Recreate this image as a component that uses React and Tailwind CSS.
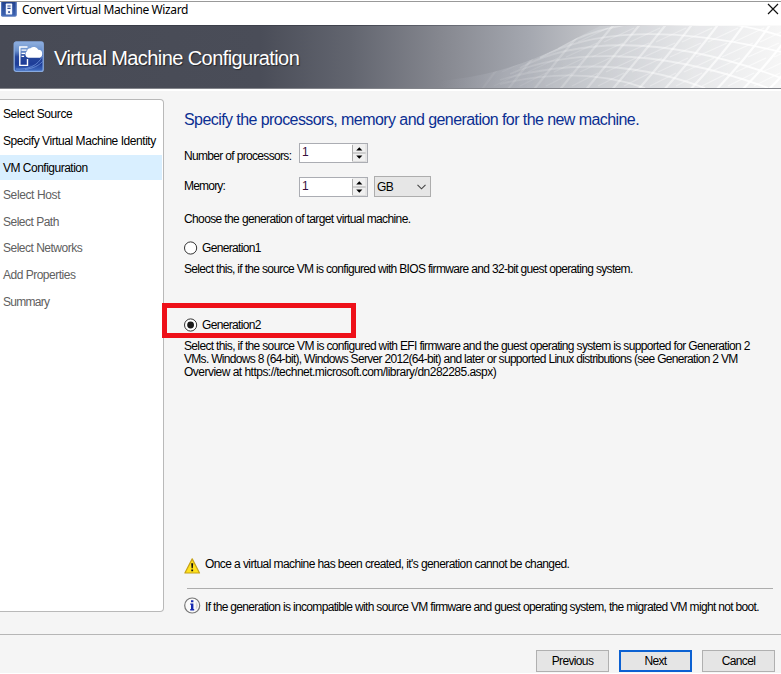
import React from "react";

const steps = [
  { label: "Select Source", cls: "text-black tracking-[-0.42px]" },
  { label: "Specify Virtual Machine Identity", cls: "text-black tracking-[-0.45px]" },
  { label: "VM Configuration", cls: "text-black bg-[#d9efff] tracking-[-0.5px]" },
  { label: "Select Host", cls: "text-[#606060] tracking-[-0.38px]" },
  { label: "Select Path", cls: "text-[#606060] tracking-[-0.5px]" },
  { label: "Select Networks", cls: "text-[#606060] tracking-[-0.5px]" },
  { label: "Add Properties", cls: "text-[#606060] tracking-[-0.5px]" },
  { label: "Summary", cls: "text-[#606060] tracking-[-0.72px]" },
];

function TitleIcon() {
  return (
    <svg width="17" height="16" viewBox="0 0 17 16" className="block shrink-0">
      <defs>
        <linearGradient id="ti" x1="0" y1="0" x2="0" y2="1">
          <stop offset="0" stopColor="#1e3c88" />
          <stop offset="1" stopColor="#3f66b4" />
        </linearGradient>
      </defs>
      <rect x="1" y="-2" width="15.6" height="16.6" rx="1.5" fill="url(#ti)" />
      <rect x="1.6" y="-2" width="14.4" height="16" rx="1" fill="none" stroke="#5f7fc2" strokeWidth="0.9" />
      <rect x="5.8" y="1.6" width="6.4" height="11" rx="0.6" fill="#f4f7ff" />
      <path d="M7.4 4h3.2M7.4 6.4h3.2" stroke="#27468f" strokeWidth="1.1" />
      <rect x="8.2" y="9.2" width="1.7" height="1.7" fill="#27468f" />
    </svg>
  );
}

function HeaderIcon() {
  return (
    <svg width="32" height="32" viewBox="0 0 32 32" className="block shrink-0">
      <defs>
        <linearGradient id="hi" x1="0" y1="0" x2="0" y2="1">
          <stop offset="0" stopColor="#8fb0de" />
          <stop offset="0.3" stopColor="#6a90cc" />
          <stop offset="0.5" stopColor="#27479c" />
          <stop offset="0.75" stopColor="#1d3c98" />
          <stop offset="1" stopColor="#4270c4" />
        </linearGradient>
      </defs>
      <rect x="1.2" y="1" width="29" height="29.4" rx="2" fill="url(#hi)" stroke="#88aadf" strokeWidth="1.3" />
      <path d="M3 28C14 29 25 25 29.5 15M12 28.5c8-1 14-4 17.5-8" stroke="#7ea3e6" strokeWidth="0.9" fill="none" opacity="0.7" />
      <path d="M14.5 6H6.8v18.4h7.7V18" fill="none" stroke="#fff" strokeWidth="1.4" />
      <path d="M8.5 9.2h5M8.5 12.3h3.6M8.5 15.3h2.6" stroke="#fff" strokeWidth="1.2" />
      <path d="M15 16.8a3.8 3.8 0 0 1-.9-6.8 3.2 3.2 0 0 1 3.4-2.8 5 5 0 0 1 7.8 1.6 4 4 0 0 1-.2 8z" fill="#fff" />
    </svg>
  );
}

const HILL = "M0 55C50 50 85 38 118 22Q142 9 160 0H341V62H0z";

function BannerMesh() {
  const v = [0, 1, 2, 3, 4, 5, 6, 7, 8, 9, 10, 11];
  return (
    <svg width="341" height="62" viewBox="0 0 341 62" className="block shrink-0">
      <defs>
        <linearGradient id="mesh" gradientUnits="userSpaceOnUse" x1="0" y1="0" x2="341" y2="20">
          <stop offset="0" stopColor="#9a9da7" stopOpacity="0" />
          <stop offset="0.2" stopColor="#b0b3bb" stopOpacity="0.6" />
          <stop offset="0.4" stopColor="#c3c6cb" />
          <stop offset="0.55" stopColor="#d3d5d9" />
          <stop offset="0.75" stopColor="#e7e8ea" />
          <stop offset="1" stopColor="#f6f6f6" />
        </linearGradient>
        <linearGradient id="lines" gradientUnits="userSpaceOnUse" x1="0" y1="0" x2="341" y2="1">
          <stop offset="0.05" stopColor="#fff" stopOpacity="0" />
          <stop offset="0.4" stopColor="#fff" stopOpacity="0.22" />
          <stop offset="0.7" stopColor="#fff" stopOpacity="0.5" />
          <stop offset="1" stopColor="#fff" stopOpacity="1" />
        </linearGradient>
        <clipPath id="hill">
          <path d={HILL} />
        </clipPath>
      </defs>
      <path d={HILL} fill="url(#mesh)" />
      <g clipPath="url(#hill)" fill="none" stroke="url(#lines)">
        <g strokeWidth="1.8">
          <path d="M118 22C170 -8 260 -16 341 10" />
          <path d="M100 32C150 4 230 -1 341 26" />
          <path d="M80 42C130 14 220 6 341 52" />
          <path d="M70 48C120 26 210 18 328 62" />
          <path d="M60 54C120 36 190 34 265 62" />
          <path d="M60 58C110 46 160 46 205 62" />
        </g>
        <g strokeWidth="2.2">
          {v.map((i) => (
            <path key={i} d={`M${40 + i * 26} 66Q${66 + i * 27} 30 ${98 + i * 26} -4`} />
          ))}
        </g>
        <g strokeWidth="1.1" opacity="0.65">
          {v.map((i) => (
            <path key={i} d={`M${54 + i * 26} 60L${80 + i * 26} 47M${62 + i * 26} 46L${92 + i * 26} 32M${74 + i * 26} 31L${105 + i * 26} 17M${86 + i * 26} 16L${116 + i * 26} 2`} />
          ))}
        </g>
      </g>
    </svg>
  );
}

function Spinner({ value }) {
  return (
    <div className="flex h-5 w-[69px] border border-[#abadb3] bg-white">
      <span className="flex-1 pl-[2px] text-[12px] leading-[17px] text-[#38103c]">{value}</span>
      <svg width="15" height="18" viewBox="0 0 15 18" className="block shrink-0">
        <rect width="15" height="18" fill="#f0f0f0" />
        <path d="M0.5 1V17M0 9H14" stroke="#acacac" />
        <path d="M14 0V18M0 17.5H14" stroke="#dcdcdc" />
        <path d="M4.2 6.5L7.3 3.3L10.4 6.5zM4.2 11.5L7.3 14.7L10.4 11.5z" fill="#000" />
      </svg>
    </div>
  );
}

function Radio({ checked }) {
  return (
    <svg width="14" height="14" viewBox="0 0 14 14" className="block shrink-0">
      <circle cx="6.6" cy="7" r="6.1" fill="#fff" stroke="#333" strokeWidth="1" />
      {checked && <circle cx="6.6" cy="7" r="3.4" fill="#1a1a1a" />}
    </svg>
  );
}

function WarningIcon() {
  return (
    <svg width="17" height="16" viewBox="0 0 17 16" className="block shrink-0">
      <path d="M8.2 0.9L15.5 15H0.9z" fill="#ffe11c" stroke="#c6a217" strokeWidth="1.2" strokeLinejoin="round" />
      <path d="M7.2 5.2h2l-.4 5h-1.2zM7.3 11.5h1.8v1.8H7.3z" fill="#111" />
    </svg>
  );
}

function InfoIcon() {
  return (
    <svg width="17" height="17" viewBox="0 0 17 17" className="block shrink-0">
      <circle cx="8.2" cy="8.5" r="7.5" fill="#fafafa" stroke="#777" strokeWidth="1.2" />
      <path d="M11.8 4.5a5 5 0 0 1 0 8z" fill="#d9d9d9" />
      <path d="M7 3.2h2.4v2.1H7zM6.2 6.6h3.2v5.5h.8v1.3H6.2v-1.3H7V7.8h-.8z" fill="#1429b0" />
    </svg>
  );
}

export default function App() {
  return (
    <div className="flex h-[674px] w-[781px] flex-col overflow-hidden border-b border-white bg-[#f5f5f5] font-['Liberation_Sans',Arial,sans-serif] text-[12px] whitespace-nowrap text-black">
      <div className="h-px shrink-0 bg-white" />
      <header className="flex h-6 shrink-0 items-start border-t border-[#999] bg-white">
        <TitleIcon />
        <h1 className="ml-[5px] flex-1 font-['Noto_Sans',sans-serif] text-[12px] leading-[15px] tracking-[-0.38px]">Convert Virtual Machine Wizard</h1>
        <svg width="12" height="12" viewBox="0 0 12 12" className="mt-[1px] mr-[2px] block">
          <path d="M1 1L11 11M11 1L1 11" stroke="#111" strokeWidth="1.2" />
        </svg>
      </header>
      <div className="h-px shrink-0 bg-[linear-gradient(90deg,#343842_0px,#40434e_350px,#8a8d95_540px,#d5d5d8_640px,#fafafa_700px)]" />
      <div className="flex h-[63px] shrink-0 justify-between border-b border-b-[#83858b] bg-[linear-gradient(90deg,#474a55_0px,#4a4d58_260px,#62656f_350px,#85878f_440px,#a5a8b0_530px,#bcbec3_580px,#e0e0e3_650px,#fafafa_781px)]">
        <div className="flex items-center pl-[13px]">
          <HeaderIcon />
          <h2 className="ml-[9px] pt-px text-[20px] leading-6 tracking-[-0.58px] text-white [text-shadow:1px_1px_1px_rgba(0,0,0,0.5)]">Virtual Machine Configuration</h2>
        </div>
        <BannerMesh />
      </div>
      <div className="h-[2px] shrink-0 bg-white" />

      <div className="flex h-[544px] shrink-0 border-b border-[#b6b6b6] pt-2">
        <nav className="h-[513px] w-[164px] shrink-0 rounded-r-[4px] border border-l-0 border-[#b9b9b9] bg-white pt-px pr-px">
          {steps.map((s) => (
            <div key={s.label} className="h-[26.9px]">
              <div className={`h-[25px] pl-[3px] leading-[26px] ${s.cls}`}>{s.label}</div>
            </div>
          ))}
        </nav>

        <main className="ml-[20px] w-[589px] tracking-[-0.67px]">
          <h3 className="pt-[11px] text-[16px] leading-[20px] tracking-[-0.57px] text-[#0b2f92]">Specify the processors, memory and generation for the new machine.</h3>
          <div className="mt-[13px] flex h-5">
            <label className="w-[115px] pt-[5px] leading-[16px]">Number of processors:</label>
            <Spinner value="1" />
          </div>
          <div className="mt-[14px] flex h-5">
            <label className="w-[115px] pt-px leading-[16px] tracking-[-0.8px]">Memory:</label>
            <Spinner value="1" />
            <div className="-mt-px ml-[6px] flex h-[21px] w-[57px] items-center justify-between border border-[#adadad] bg-[#e6e6e6] pr-1 pl-[2px]">
              <span>GB</span>
              <svg width="9" height="6" viewBox="0 0 9 6"><path d="M0.5 0.8L4.5 4.8L8.5 0.8" fill="none" stroke="#444" strokeWidth="1.1" /></svg>
            </div>
          </div>
          <p className="mt-[14px] leading-[16px] tracking-[-0.62px]">Choose the generation of target virtual machine.</p>
          <div className="mt-[13px] flex h-4 items-center gap-1">
            <Radio />
            <span>Generation1</span>
          </div>
          <p className="mt-[5px] leading-[16px]">Select this, if the source VM is configured with BIOS firmware and 32-bit guest operating system.</p>
          <div className="relative mt-[40px] flex h-4 items-center gap-1">
            <Radio checked />
            <span>Generation2</span>
            <div className="absolute -top-[14px] -left-[22px] h-[35px] w-[194px] border-[5px] border-[#ee1019]" />
          </div>
          <div className="mt-[7px] leading-[13px]">
            <p className="tracking-[-0.655px]">Select this, if the source VM is configured with EFI firmware and the guest operating system is supported for Generation 2</p>
            <p className="tracking-[-0.69px]">VMs. Windows 8 (64-bit), Windows Server 2012(64-bit) and later or supported Linux distributions (see Generation 2 VM</p>
            <p className="tracking-[-0.52px]">Overview at https://technet.microsoft.com/library/dn282285.aspx)</p>
          </div>
          <div className="mt-[177px] flex h-[18px] gap-1">
            <div className="pt-[2px]"><WarningIcon /></div>
            <span className="leading-[17px] tracking-[-0.59px]">Once a virtual machine has been created, it's generation cannot be changed.</span>
          </div>
          <div className="mt-[14px] ml-[3px] h-px bg-[#adadad]" />
          <div className="mt-[8px] flex h-[18px] gap-[4px]">
            <InfoIcon />
            <span className="pt-[2px] leading-[17px]">If the generation is incompatible with source VM firmware and guest operating system, the migrated VM might not boot.</span>
          </div>
        </main>
      </div>

      <footer className="flex justify-end gap-[10px] pt-[15px] pr-[6px] tracking-[-0.65px]">
        <button className="h-[22px] w-[73px] border border-[#b0b0b0] bg-[#e5e5e5] leading-[21px]">Previous</button>
        <button className="h-[22px] w-[73px] border-2 border-[#0c61d2] bg-[#e5e5e5] leading-[19px]">Next</button>
        <button className="h-[22px] w-[73px] border border-[#b0b0b0] bg-[#e5e5e5] leading-[21px]">Cancel</button>
      </footer>
    </div>
  );
}
